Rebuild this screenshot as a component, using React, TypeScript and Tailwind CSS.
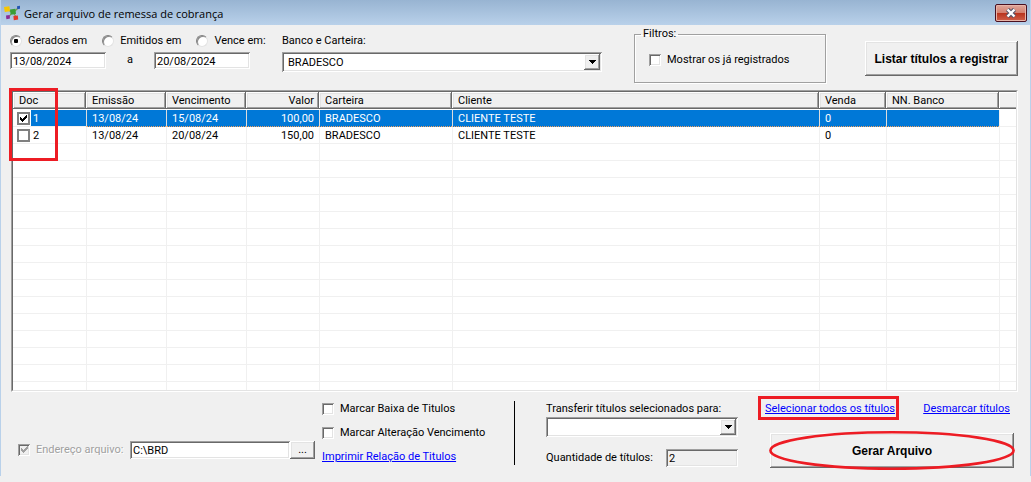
import React from "react";

const SUNKEN =
  "shadow-[inset_1px_1px_0_#a0a0a0,inset_-1px_-1px_0_#ffffff,inset_2px_2px_0_#696969,inset_-2px_-2px_0_#e3e3e3]";
const RAISED =
  "shadow-[inset_-1px_-1px_0_#696969,inset_1px_1px_0_#ffffff,inset_-2px_-2px_0_#a0a0a0,inset_2px_2px_0_#e3e3e3]";

function Tick({ className }: { className: string }) {
  return (
    <svg viewBox="0 0 7 7" className={className} shapeRendering="crispEdges" aria-hidden="true">
      <path
        d="M0 2h1v3H0zM1 3h1v3H1zM2 4h1v3H2zM3 3h1v3H3zM4 2h1v3H4zM5 1h1v3H5zM6 0h1v3H6z"
        fill="currentColor"
      />
    </svg>
  );
}

function CheckField({
  id,
  label,
  checked = false,
  disabled = false,
}: {
  id: string;
  label: string;
  checked?: boolean;
  disabled?: boolean;
}) {
  return (
    <div className="flex items-center gap-1.5">
      <span className="relative flex size-3 shrink-0">
        <input
          id={id}
          type="checkbox"
          defaultChecked={checked}
          disabled={disabled}
          className={`peer size-3 appearance-none bg-white disabled:bg-[#f0f0f0] ${SUNKEN}`}
        />
        <Tick
          className={`pointer-events-none absolute left-[3px] top-[2px] hidden size-[7px] peer-checked:block ${
            disabled ? "text-[#a0a0a0]" : "text-black"
          }`}
        />
      </span>
      <label
        htmlFor={id}
        className={disabled ? "text-[#a0a0a0] [text-shadow:1px_1px_0_#ffffff]" : ""}
      >
        {label}
      </label>
    </div>
  );
}

function RadioField({ id, label, checked = false }: { id: string; label: string; checked?: boolean }) {
  return (
    <div className="flex items-center gap-1.5">
      <span className="relative flex size-3 shrink-0">
        <input
          id={id}
          type="radio"
          name="periodo"
          defaultChecked={checked}
          className="peer size-3 appearance-none rounded-full border border-b-[#e3e3e3] border-l-[#808080] border-r-[#e3e3e3] border-t-[#808080] bg-white shadow-[inset_1px_1px_0_#8a8a8a]"
        />
        <span className="pointer-events-none absolute left-1 top-1 hidden size-1 rounded-[1px] bg-black peer-checked:block" />
      </span>
      <label htmlFor={id}>{label}</label>
    </div>
  );
}

function DropDown({ id, options, size }: { id: string; options: string[]; size: string }) {
  return (
    <div className={`relative ${size}`}>
      <select
        id={id}
        className={`h-full w-full appearance-none bg-white pl-1.5 pr-5 pt-px ${SUNKEN}`}
      >
        {options.map((option) => (
          <option key={option}>{option}</option>
        ))}
      </select>
      <span
        className={`pointer-events-none absolute bottom-[2px] right-[2px] top-[2px] flex w-4 items-center justify-center bg-[#f0f0f0] ${RAISED}`}
      >
        <svg viewBox="0 0 7 4" className="h-1 w-[7px]" shapeRendering="crispEdges" aria-hidden="true">
          <path d="M0 0h7v1H0zM1 1h5v1H1zM2 2h3v1H2zM3 3h1v1H3z" />
        </svg>
      </span>
    </div>
  );
}

type Titulo = {
  doc: string;
  emissao: string;
  vencimento: string;
  valor: string;
  carteira: string;
  cliente: string;
  venda: string;
  nnBanco: string;
};

const TITULOS: Titulo[] = [
  { doc: "1", emissao: "13/08/24", vencimento: "15/08/24", valor: "100,00", carteira: "BRADESCO", cliente: "CLIENTE TESTE", venda: "0", nnBanco: "" },
  { doc: "2", emissao: "13/08/24", vencimento: "20/08/24", valor: "150,00", carteira: "BRADESCO", cliente: "CLIENTE TESTE", venda: "0", nnBanco: "" },
];

const COLUMNS = [
  { title: "Doc", width: "w-[73px]" },
  { title: "Emissão", width: "w-20" },
  { title: "Vencimento", width: "w-20" },
  { title: "Valor", width: "w-[73px]" },
  { title: "Carteira", width: "w-[133px]" },
  { title: "Cliente", width: "" },
  { title: "Venda", width: "w-[67px]" },
  { title: "NN. Banco", width: "w-[113px]" },
  { title: "", width: "w-[17px]" },
];

const EMPTY_ROWS = 14;

function TitulosTable() {
  const line = "border-b border-[#f0f0f0] p-0";
  return (
    <table className="w-full table-fixed border-separate border-spacing-0 bg-white">
      <colgroup>
        {COLUMNS.map((c, i) => (
          <col key={i} className={c.width} />
        ))}
      </colgroup>
      <thead>
        <tr className="h-[18px]">
          {COLUMNS.map((c, i) => (
            <th
              key={i}
              className={`border-b border-white bg-[#f0f0f0] p-0 pt-px font-normal ${
                c.title === "Valor" ? "pr-[5px] text-right" : "pl-1.5 text-left"
              } ${
                c.title
                  ? RAISED
                  : "shadow-[inset_0_-1px_0_#696969,inset_1px_1px_0_#ffffff,inset_0_-2px_0_#a0a0a0]"
              }`}
            >
              {c.title}
            </th>
          ))}
        </tr>
      </thead>
      <tbody>
        {TITULOS.map((t, i) => {
          const selected = i === 0;
          const cell = `border-b border-l p-0 pl-[5px] leading-[15px] pt-px ${
            selected
              ? "border-b-[#f0a060] border-l-[#dcdcdc] border-dotted [border-left-style:solid] bg-[#0078d7] text-white"
              : "border-[#f0f0f0]"
          }`;
          return (
            <tr key={t.doc} className="h-[17px] whitespace-nowrap">
              <td className={line}>
                <div className="flex h-4 items-center gap-px pl-1">
                  <span className="relative flex size-[13px] shrink-0">
                    <input
                      type="checkbox"
                      aria-label={`Título ${t.doc}`}
                      defaultChecked={selected}
                      className="peer size-[13px] appearance-none border-2 border-[#808080] bg-white"
                    />
                    <Tick className="pointer-events-none absolute left-[3px] top-[3px] hidden size-[7px] text-black peer-checked:block" />
                  </span>
                  <span
                    className={`h-full flex-1 pl-0.5 pt-px leading-[15px] ${
                      selected ? "bg-[#0078d7] text-white" : ""
                    }`}
                  >
                    {t.doc}
                  </span>
                </div>
              </td>
              <td className={cell}>{t.emissao}</td>
              <td className={cell}>{t.vencimento}</td>
              <td className={`${cell} pr-[5px] text-right`}>{t.valor}</td>
              <td className={cell}>{t.carteira}</td>
              <td className={cell}>{t.cliente}</td>
              <td className={cell}>{t.venda}</td>
              <td className={cell}>{t.nnBanco}</td>
              <td className={`${line} border-l`} />
            </tr>
          );
        })}
        {Array.from({ length: EMPTY_ROWS }, (_, r) => (
          <tr key={r} className="h-[17px]">
            {COLUMNS.map((_, i) => (
              <td key={i} className={i === 0 ? line : `${line} border-l`} />
            ))}
          </tr>
        ))}
        <tr className="h-2">
          {COLUMNS.map((_, i) => (
            <td key={i} className={i === 0 ? "p-0" : "border-l border-[#f0f0f0] p-0"} />
          ))}
        </tr>
      </tbody>
    </table>
  );
}

function TitleBar() {
  return (
    <header className="flex h-[25px] items-center bg-linear-to-b from-[#98b4d2] to-[#b9d1ea] px-[3px]">
      <svg viewBox="0 0 16 16" className="size-4" aria-hidden="true">
        <path d="M4 5l4 2M11 6l3-3M10 9l3 4M7 9l-3 4" stroke="#7f9a4a" strokeWidth="1.2" />
        <path d="M0 2l5.4-.8.6 5-5.2.8z" fill="#f7c600" />
        <path d="M6 4.6l5.4-.8.6 5.2-5.4.8z" fill="#3a9e36" />
        <path d="M13 1.2l3-.4v3l-2.8.4z" fill="#2456b4" />
        <path d="M2 10.4l3.6-.4.4 3.6-3.6.6z" fill="#8c2a96" />
        <path d="M9.4 11l4.4-.6.4 4-4.4.8z" fill="#e2382a" />
      </svg>
      <h1 className="ml-1 flex-1 pt-0.5 font-['Open_Sans',sans-serif] text-[11px] font-normal leading-4 text-black">
        Gerar arquivo de remessa de cobrança
      </h1>
      <button
        type="button"
        aria-label="Fechar"
        className="flex h-[18px] w-8 items-center justify-center rounded-[2px] border border-[#4a1020] bg-[linear-gradient(#e0a79b_0%,#d4806f_48%,#b8321c_50%,#d0604a_100%)] shadow-[inset_0_0_0_1px_#e8b4a8]"
      >
        <svg viewBox="0 0 12 10" className="h-2.5 w-3" aria-hidden="true">
          <path d="M2.5 1.5l7 7M9.5 1.5l-7 7" stroke="#53556a" strokeWidth="4.4" />
          <path d="M2.5 1.5l7 7M9.5 1.5l-7 7" stroke="#ffffff" strokeWidth="2.4" />
        </svg>
      </button>
    </header>
  );
}

export default function App() {
  return (
    <div className="min-h-screen bg-[#f0f0f0] font-[Roboto,'Liberation_Sans',sans-serif] text-[11px] leading-4 text-black">
      <div className="border-x border-[#b9d1ea]">
        <TitleBar />
        <main className="pb-2 pl-[9px] pr-3">
          <section className="flex h-[65px] items-start">
            <div className="flex w-60 flex-col pt-2">
              <div className="flex gap-[15px] whitespace-nowrap">
                <RadioField id="gerados" label="Gerados em" checked />
                <RadioField id="emitidos" label="Emitidos em" />
                <RadioField id="vence" label="Vence em:" />
              </div>
              <div className="mt-[3px] flex items-start justify-between">
                <input
                  type="text"
                  aria-label="Data inicial"
                  defaultValue="13/08/2024"
                  className={`h-[17px] w-24 bg-white px-[3px] pt-px ${SUNKEN}`}
                />
                <span>a</span>
                <input
                  type="text"
                  aria-label="Data final"
                  defaultValue="20/08/2024"
                  className={`h-[17px] w-24 bg-white px-[3px] pt-px ${SUNKEN}`}
                />
              </div>
            </div>
            <div className="ml-8 flex flex-col gap-[3px] pt-2">
              <label htmlFor="banco">Banco e Carteira:</label>
              <DropDown id="banco" options={["BRADESCO"]} size="h-5 w-80" />
            </div>
            <fieldset className="ml-8 mt-px h-[57px] w-48 border border-[#a0a0a0] px-3.5 shadow-[1px_1px_0_#ffffff,inset_1px_1px_0_#ffffff]">
              <legend className="-ml-2 px-0.5">Filtros:</legend>
              <div className="pt-2.5">
                <CheckField id="registrados" label="Mostrar os já registrados" />
              </div>
            </fieldset>
            <button
              type="button"
              className={`ml-auto mt-4 h-[35px] w-[153px] bg-[#f0f0f0] font-['Liberation_Sans',Arial,sans-serif] text-[12px] font-bold ${RAISED}`}
            >
              Listar títulos a registrar
            </button>
          </section>

          <section className="relative ml-px">
            <div className="border border-b-white border-l-[#a0a0a0] border-r-white border-t-[#a0a0a0]">
              <div className="border border-b-[#e3e3e3] border-l-[#696969] border-r-[#e3e3e3] border-t-[#696969]">
                <TitulosTable />
              </div>
            </div>
            <span className="pointer-events-none absolute -left-0.5 -top-0.5 h-[73px] w-[49px] border-3 border-[#ed1c24]" />
          </section>

          <section className="flex items-start pt-[9px]">
            <div className="flex w-78 items-center pl-2 pr-[7px] pt-10">
              <CheckField id="endereco" label="Endereço arquivo:" checked disabled />
              <input
                type="text"
                aria-label="Endereço arquivo"
                defaultValue="C:\BRD"
                className={`ml-auto h-[18px] w-40 bg-white px-[3px] ${SUNKEN}`}
              />
              <button
                type="button"
                aria-label="Procurar pasta"
                className={`h-[18px] w-[25px] bg-[#f0f0f0] leading-3 ${RAISED}`}
              >
                ...
              </button>
            </div>
            <div className="flex w-48 flex-col gap-2">
              <CheckField id="baixa" label="Marcar Baixa de Titulos" />
              <CheckField id="alteracao" label="Marcar Alteração Vencimento" />
              <a href="#imprimir" className="text-[#0000ff] underline">
                Imprimir Relação de Titulos
              </a>
            </div>
            <div className="h-16 w-px bg-black" />
            <div className="ml-[31px] flex w-48 flex-col">
              <label htmlFor="transferir">Transferir títulos selecionados para:</label>
              <DropDown id="transferir" options={[""]} size="h-5 w-48" />
              <div className="mt-3 flex items-center justify-between">
                <label htmlFor="quantidade">Quantidade de títulos:</label>
                <input
                  id="quantidade"
                  type="text"
                  readOnly
                  defaultValue="2"
                  className={`h-[18px] w-18 bg-[#f0f0f0] px-[3px] ${SUNKEN}`}
                />
              </div>
            </div>
            <div className="ml-auto mr-1 flex w-[249px] flex-col gap-4">
              <div className="flex justify-between pr-1">
                <span className="relative">
                  <a href="#selecionar" className="text-[#0000ff] underline">
                    Selecionar todos os títulos
                  </a>
                  <span className="pointer-events-none absolute -bottom-[3px] -left-[7px] -right-1 -top-[5px] border-3 border-[#ed1c24]" />
                </span>
                <a href="#desmarcar" className="text-[#0000ff] underline">
                  Desmarcar títulos
                </a>
              </div>
              <div className="relative self-end">
                <button
                  type="button"
                  className={`block h-[35px] w-61 bg-[#f0f0f0] font-['Liberation_Sans',Arial,sans-serif] text-[12px] font-bold ${RAISED}`}
                >
                  Gerar Arquivo
                </button>
                <svg
                  viewBox="0 0 246 39"
                  preserveAspectRatio="none"
                  className="pointer-events-none absolute -left-px -top-0.5 h-[39px] w-[246px]"
                  aria-hidden="true"
                >
                  <ellipse cx="123" cy="19.5" rx="121.6" ry="18.2" fill="none" stroke="#ed1c24" strokeWidth="2.6" />
                </svg>
              </div>
            </div>
          </section>
        </main>
      </div>
    </div>
  );
}
